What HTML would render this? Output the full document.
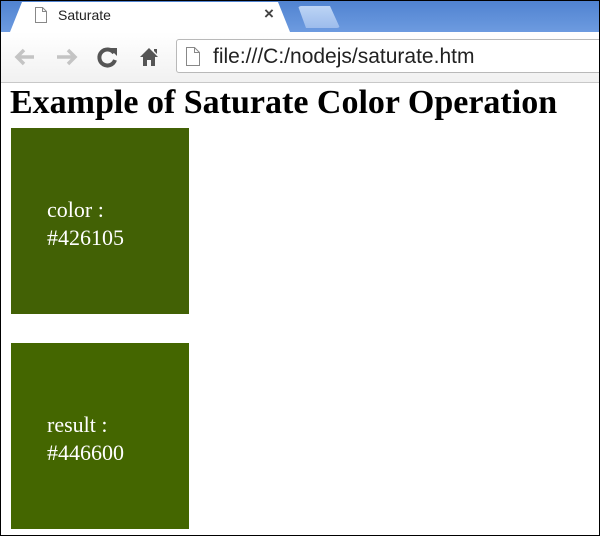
<!DOCTYPE html>
<html><head><meta charset="utf-8"><style>
*{margin:0;padding:0;box-sizing:border-box}
html,body{width:600px;height:536px;overflow:hidden;background:#fff}
.frame{position:absolute;left:0;top:0;width:600px;height:536px;border:1px solid #000;z-index:10;pointer-events:none}
.tabbar{position:absolute;left:0;top:0;width:600px;height:32px;background:linear-gradient(#4f82d0,#6d9be0)}
.tab{position:absolute;left:10px;top:2px;width:280px;height:30px;background:#fff;clip-path:polygon(0 100%,12px 0,268px 0,280px 100%)}
.tab2{position:absolute;left:298px;top:6px;width:42px;height:22px;background:linear-gradient(#bcd4f5,#9dbcec);clip-path:polygon(0 0,32px 0,42px 100%,8px 100%);border-radius:3px}
.tabt{position:absolute;left:58px;top:7px;font:14px "Liberation Sans",sans-serif;color:#222}
.x{position:absolute;left:264px;top:4px;font:bold 17px "Liberation Sans",sans-serif;color:#444}
.toolbar{position:absolute;left:0;top:32px;width:600px;height:51px;background:linear-gradient(#fff,#f1f1f1);border-bottom:1px solid #c8c8c8}
.url{position:absolute;left:176px;top:7px;width:430px;height:34px;border:1px solid #b9b9b9;border-radius:3px;background:#fff}
.urlt{position:absolute;left:36px;top:5px;font:21px "Liberation Sans",sans-serif;color:#222}
h1{position:absolute;left:10px;top:84px;font:bold 34px "Liberation Serif",serif;color:#000;white-space:nowrap}
.box{position:absolute;left:11px;width:178px;height:186px;color:#fff;font:22px "Liberation Serif",serif;line-height:28px;padding:68px 0 0 36px}
</style></head><body>
<div class="frame"></div>
<div class="tabbar">
 <div class="tab"></div>
 <svg style="position:absolute;left:34px;top:6px" width="14" height="18"><path d="M1.5 1.5h7l4 4v11h-11z M8.5 1.5v4h4" fill="#fff" stroke="#888"/></svg>
 <div class="tabt">Saturate</div>
 <div class="x">×</div>
 <div class="tab2"></div>
</div>
<div class="toolbar">
 <svg style="position:absolute;left:12px;top:14px" width="26" height="22"><path d="M22 11H5M12 4l-7 7 7 7" fill="none" stroke="#c4c4c4" stroke-width="3.5"/></svg>
 <svg style="position:absolute;left:54px;top:14px" width="26" height="22"><path d="M3 11h17M14 4l7 7-7 7" fill="none" stroke="#c4c4c4" stroke-width="3.5"/></svg>
 <svg style="position:absolute;left:96px;top:13px" width="24" height="24"><path d="M18 8A8 8 0 1 0 19 15" fill="none" stroke="#555" stroke-width="4"/><path d="M13 3h8v8z" fill="#555"/></svg>
 <svg style="position:absolute;left:138px;top:13px" width="24" height="24"><path d="M2 12L11 3l9 9h-3v9h-4v-6h-4v6H5v-9z" fill="#555"/><path d="M16 4h3v5l-3-3z" fill="#555"/></svg>
 <div class="url">
  <svg style="position:absolute;left:8px;top:6px" width="16" height="21"><path d="M1.5 1.5h8l5 5v13h-13z M9.5 1.5v5h5" fill="#fff" stroke="#888"/></svg>
  <div class="urlt">file:///C:/nodejs/saturate.htm</div>
 </div>
</div>
<h1>Example of Saturate Color Operation</h1>
<div class="box" style="top:128px;background:#426105">color :<br>#426105</div>
<div class="box" style="top:343px;background:#446600">result :<br>#446600</div>
</body></html>
